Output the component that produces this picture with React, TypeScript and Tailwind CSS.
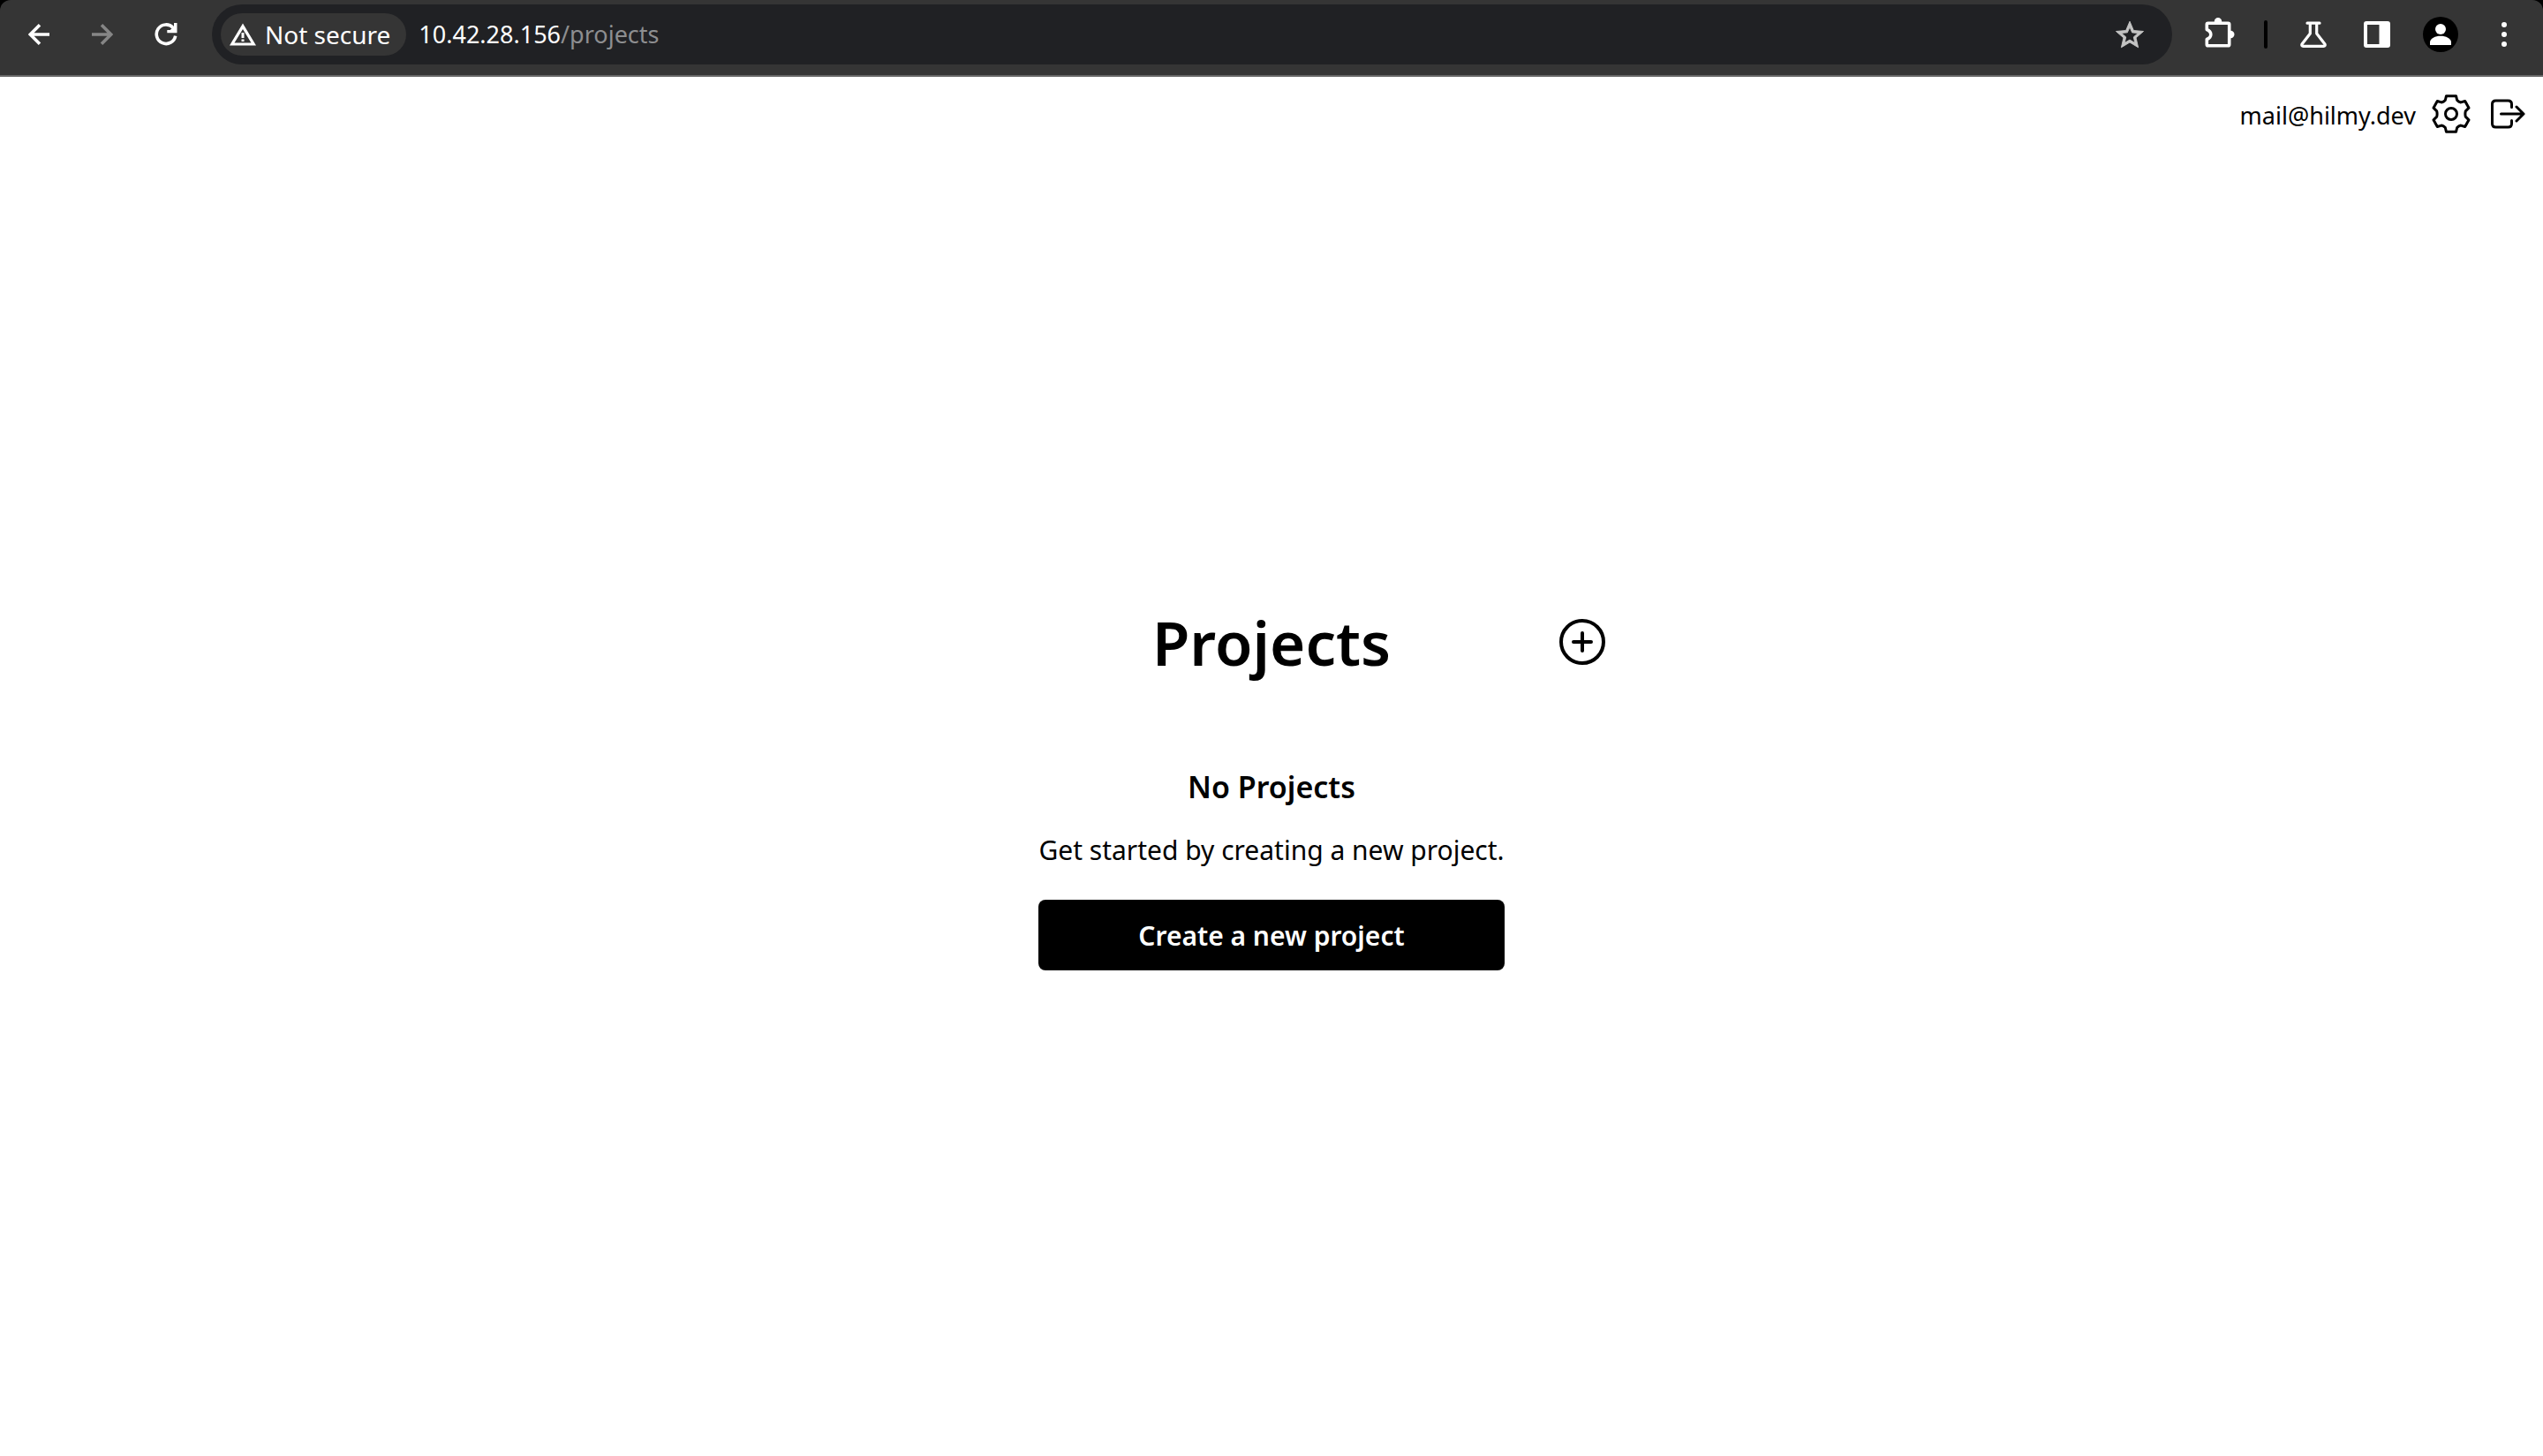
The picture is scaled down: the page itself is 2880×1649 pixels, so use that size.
import React from "react";

function ToolButton({ label, children }: { label: string; children: React.ReactNode }) {
  return (
    <button type="button" aria-label={label} className="flex size-14 shrink-0 items-center justify-center rounded-full">
      {children}
    </button>
  );
}

function BackIcon({ className }: { className: string }) {
  return (
    <svg viewBox="0 0 24 24" className={className} fill="none" stroke="currentColor" strokeWidth="3.6">
      <path d="M24 12H2.5M13 1.3 2.3 12 13 22.7" />
    </svg>
  );
}

function ReloadIcon() {
  return (
    <svg viewBox="0 0 26 26" className="size-[26px]" fill="none">
      <path d="M21 5.4A10.8 10.8 0 1 0 23.7 14.6" stroke="currentColor" strokeWidth="3.6" />
      <path d="M25.5 0v11.2H14.3V8h3.4l4.3-4.3V0z" fill="currentColor" />
    </svg>
  );
}

function WarningIcon() {
  return (
    <svg viewBox="0 0 30 26" className="h-[26px] w-[30px]" fill="currentColor">
      <path fillRule="evenodd" d="M15 .5 30 25.500H0zM15 7 5.500 22.500h19z" />
      <path d="M13.500 11h3v6h-3zM13.500 18.500h3v2.500h-3z" />
    </svg>
  );
}

function StarIcon() {
  return (
    <svg viewBox="1.2 1.2 21.6 20.6" className="h-8 w-[34px]" fill="currentColor" stroke="currentColor" strokeWidth=".6">
      <path d="M22 9.240l-7.190-.620L12 2 9.190 8.630 2 9.240l5.460 4.730L5.820 21 12 17.270 18.180 21l-1.630-7.030L22 9.240zM12 15.400l-3.760 2.270 1-4.280-3.320-2.880 4.380-.380L12 6.100l1.710 4.040 4.380.380-3.320 2.880 1 4.280L12 15.400z" />
    </svg>
  );
}

function PuzzleIcon() {
  return (
    <svg viewBox="0 0 40 40" className="size-10">
      <path d="M8.600 7.300h22.800q1.300 0 1.300 1.300v22.800q0 1.300-1.300 1.300H8.600q-1.300 0-1.300-1.300v-5.900c6-2.400 6-8.600 0-11V8.600q0-1.300 1.300-1.300z" fill="none" stroke="currentColor" strokeWidth="3.600" strokeLinejoin="round" />
      <path d="M15.800 6V5.200a4.200 4.200 0 0 1 8.400 0V6zM34 15.800h.3a4.200 4.200 0 0 1 0 8.400H34z" fill="currentColor" />
    </svg>
  );
}

function FlaskIcon() {
  return (
    <svg viewBox="0 0 30 30" className="size-[30px]" fill="none" stroke="currentColor" strokeLinecap="round" strokeLinejoin="round" strokeWidth="3.200">
      <path d="M8 2.200h14M11.300 2.500v11.500L2 26q-.8 2.300 1.500 2.300h23q2.300 0 1.500-2.300l-9.300-12V2.500" />
    </svg>
  );
}

function PanelIcon() {
  return (
    <svg viewBox="0 0 30 30" className="size-[30px]" fill="currentColor">
      <path fillRule="evenodd" d="M3 0h24q3 0 3 3v24q0 3-3 3H3q-3 0-3-3V3Q0 0 3 0zM4 4v22h13.500V4z" />
    </svg>
  );
}

function AvatarIcon() {
  return (
    <svg viewBox="0 0 40 40" className="size-10">
      <circle cx="20" cy="20" r="20" fill="#000" />
      <circle cx="20" cy="14" r="6" fill="#fff" />
      <path d="M8 32v-3c0-4.500 6-7.200 12-7.200s12 2.700 12 7.200v3z" fill="#fff" />
    </svg>
  );
}

function MoreIcon() {
  return (
    <svg viewBox="0 0 6 28" className="h-7 w-1.5" fill="currentColor">
      <circle cx="3" cy="3" r="3" />
      <circle cx="3" cy="14" r="3" />
      <circle cx="3" cy="25" r="3" />
    </svg>
  );
}

function GearIcon() {
  return (
    <svg viewBox="-22 -22 44 44" className="size-11" fill="none" stroke="currentColor" strokeWidth="3" strokeLinejoin="round">
      <circle r="6.500" />
      <path d="M-5.500-20.300h11l1.200 4.800Q8.500-13.500 11-13.100l4.700-1.400 4.300 7.700-3.700 3.600q-.8 3.200 0 6.400l3.700 3.600-4.300 7.700-4.700-1.400q-2.500.4-4.300 2.400l-1.200 4.800h-11l-1.200-4.800q-1.800-2-4.300-2.400l-4.700 1.400L-20 6.800l3.700-3.600q.8-3.200 0-6.400L-20-6.800l4.300-7.700 4.700 1.400q2.500-.4 4.300-2.400z" />
    </svg>
  );
}

function LogoutIcon() {
  return (
    <svg viewBox="0 0 40 34" className="h-[34px] w-10" fill="none" stroke="currentColor" strokeWidth="3" strokeLinecap="round" strokeLinejoin="round">
      <path d="M24.500 9.500V6q0-4-4-4h-14q-4 0-4 4v22q0 4 4 4h14q4 0 4-4v-3.500M12.500 17H38M30 9l8 8-8 8" />
    </svg>
  );
}

function PlusCircleIcon() {
  return (
    <svg viewBox="0 0 52 52" className="size-[52px]" fill="none" stroke="currentColor" strokeWidth="4" strokeLinecap="round">
      <circle cx="26" cy="26" r="24" />
      <path d="M16 26h20M26 16v20" />
    </svg>
  );
}

function BrowserBar() {
  return (
    <div className="bg-black">
      <div className="flex items-start rounded-t-xl border-b-2 border-[#666] bg-[#353535] px-4 pt-[5px] pb-3 text-white">
        <div className="flex h-[68px] w-full items-center">
          <div className="flex gap-4">
            <ToolButton label="Back"><BackIcon className="size-6" /></ToolButton>
            <ToolButton label="Forward"><BackIcon className="size-6 rotate-180 text-[#868686]" /></ToolButton>
            <ToolButton label="Reload"><ReloadIcon /></ToolButton>
          </div>
          <div className="mx-6 flex h-full min-w-0 flex-1 items-center rounded-full bg-[#202124] pr-5 pl-2.5 leading-9">
            <button type="button" className="flex h-12 items-center gap-2.5 rounded-full bg-[#353535] pr-[18px] pl-2.5 text-[28px]">
              <WarningIcon />
              <span>Not secure</span>
            </button>
            <div className="min-w-0 flex-1 pl-3.5 text-[27px]">
              10.42.28.156<span className="text-[#8d8e90]">/projects</span>
            </div>
            <div className="flex text-[#c4c4c4]"><ToolButton label="Bookmark this page"><StarIcon /></ToolButton></div>
          </div>
          <ToolButton label="Extensions"><PuzzleIcon /></ToolButton>
          <div className="mx-6 h-8 w-1 rounded-full bg-black" />
          <div className="flex gap-4">
            <ToolButton label="Labs"><FlaskIcon /></ToolButton>
            <ToolButton label="Side panel"><PanelIcon /></ToolButton>
            <ToolButton label="Profile"><AvatarIcon /></ToolButton>
            <ToolButton label="Menu"><MoreIcon /></ToolButton>
          </div>
        </div>
      </div>
    </div>
  );
}

export default function App() {
  return (
    <div className="flex min-h-screen flex-col bg-white font-['Noto_Sans',sans-serif] text-black">
      <BrowserBar />
      <header className="flex items-center justify-end px-5 pt-[18px]">
        <span className="pt-1 text-[27px] leading-11">mail@hilmy.dev</span>
        <button type="button" aria-label="Settings" className="mr-[22px] ml-[18px]"><GearIcon /></button>
        <button type="button" aria-label="Log out"><LogoutIcon /></button>
      </header>
      <main className="flex flex-1 flex-col items-center justify-center pb-4">
        <div className="grid w-[756px] grid-cols-[1fr_auto_1fr] items-center">
          <h1 className="col-start-2 text-[69px] leading-20 font-semibold">Projects</h1>
          <button type="button" aria-label="Add project" className="justify-self-end"><PlusCircleIcon /></button>
        </div>
        <section className="mt-25 flex flex-col items-center">
          <h2 className="text-[34px] leading-12 font-semibold">No Projects</h2>
          <p className="mt-6 text-[30px] leading-12">Get started by creating a new project.</p>
          <button type="button" className="mt-8 h-20 w-full rounded-lg bg-black text-[30px] font-semibold text-white">Create a new project</button>
        </section>
      </main>
    </div>
  );
}
